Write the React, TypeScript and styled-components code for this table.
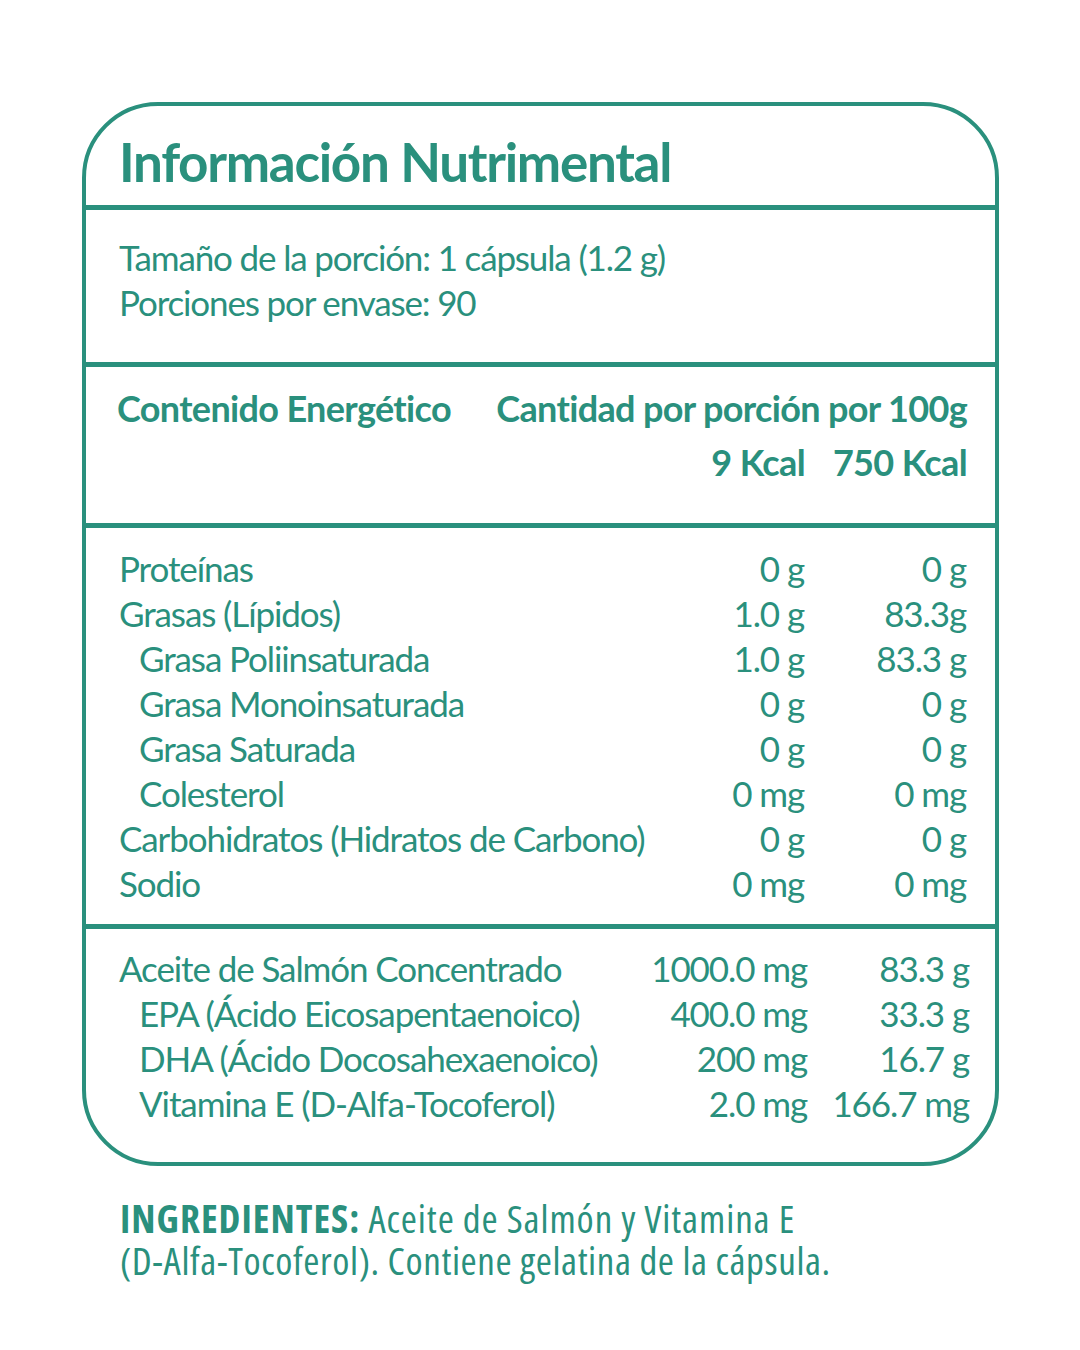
import React from "react";
import styled, { createGlobalStyle } from "styled-components";

const TEAL = "#2a907d";

const GlobalStyle = createGlobalStyle`
  html, body { margin: 0; padding: 0; background: #ffffff; }
  body { font-family: "Lato", "Open Sans", sans-serif; color: ${TEAL}; }
  * { box-sizing: border-box; }
`;

const Page = styled.main`
  padding: 102px 0 60px 82px;
`;

const Card = styled.section`
  width: 917px;
  border: 4px solid ${TEAL};
  border-radius: 76px;
`;

const TitleBar = styled.header`
  height: 99px;
  padding: 12px 0 0 33px;
  display: flex;
  align-items: center;
`;

const Title = styled.h1`
  margin: 0;
  font-family: "Lato", sans-serif;
  font-weight: 700;
  font-size: 53px;
  line-height: 1;
  letter-spacing: -1.3px;
  white-space: nowrap;
`;

const Block = styled.div<{ $pt: number; $pb: number; $pr?: number }>`
  border-top: 5px solid ${TEAL};
  padding: ${(p) => p.$pt}px ${(p) => p.$pr ?? 28}px ${(p) => p.$pb}px 33px;
`;

const Line = styled.p`
  margin: 0;
  font-size: 35px;
  line-height: 45px;
  letter-spacing: -1.15px;
  white-space: nowrap;
`;

const HeadTop = styled.div`
  display: flex;
  justify-content: space-between;
  align-items: center;
  height: 45px;
  margin-left: -2px;
`;

const HeadText = styled.span`
  font-weight: 700;
  font-size: 36px;
  line-height: 45px;
  letter-spacing: -0.65px;
  white-space: nowrap;
`;

const Grid = styled.div<{ $c1: number; $c2: number }>`
  display: grid;
  grid-template-columns: minmax(0, 1fr) ${(p) => p.$c1}px ${(p) => p.$c2}px;
  grid-auto-rows: 45px;
  align-items: center;
`;

const KcalGrid = styled(Grid)`
  margin-top: 9.5px;
`;

const Cell = styled.span<{ $indent?: boolean }>`
  font-size: 35px;
  line-height: 45px;
  letter-spacing: -1.1px;
  white-space: nowrap;
  padding-left: ${(p) => (p.$indent ? 20 : 0)}px;
`;

const Num = styled(Cell)`
  text-align: right;
`;

const KcalCell = styled(HeadText)`
  text-align: right;
`;

const Ingredients = styled.div`
  margin: 31px 0 0 0;
  padding-left: 38px;
  font-family: "Open Sans", sans-serif;
  font-stretch: 75%;
  font-size: 39px;
  line-height: 42px;
  white-space: nowrap;
`;

const IngLine = styled.p<{ $ls: number }>`
  margin: 0;
  height: 42px;
  letter-spacing: ${(p) => p.$ls}px;
`;

const Strong = styled.strong`
  font-weight: 700;
  letter-spacing: 1px;
`;

type Row = { label: string; a: string; b: string; indent?: boolean };

const nutrients: Row[] = [
  { label: "Proteínas", a: "0 g", b: "0 g" },
  { label: "Grasas (Lípidos)", a: "1.0 g", b: "83.3g" },
  { label: "Grasa Poliinsaturada", a: "1.0 g", b: "83.3 g", indent: true },
  { label: "Grasa Monoinsaturada", a: "0 g", b: "0 g", indent: true },
  { label: "Grasa Saturada", a: "0 g", b: "0 g", indent: true },
  { label: "Colesterol", a: "0 mg", b: "0 mg", indent: true },
  { label: "Carbohidratos (Hidratos de Carbono)", a: "0 g", b: "0 g" },
  { label: "Sodio", a: "0 mg", b: "0 mg" },
];

const extras: Row[] = [
  { label: "Aceite de Salmón Concentrado", a: "1000.0 mg", b: "83.3 g" },
  { label: "EPA (Ácido Eicosapentaenoico)", a: "400.0 mg", b: "33.3 g", indent: true },
  { label: "DHA (Ácido Docosahexaenoico)", a: "200 mg", b: "16.7 g", indent: true },
  { label: "Vitamina E (D-Alfa-Tocoferol)", a: "2.0 mg", b: "166.7 mg", indent: true },
];

function Rows({ rows }: { rows: Row[] }) {
  return (
    <>
      {rows.map((r) => (
        <React.Fragment key={r.label}>
          <Cell $indent={r.indent}>{r.label}</Cell>
          <Num>{r.a}</Num>
          <Num>{r.b}</Num>
        </React.Fragment>
      ))}
    </>
  );
}

export default function App() {
  return (
    <Page>
      <GlobalStyle />
      <Card>
        <TitleBar>
          <Title>Información Nutrimental</Title>
        </TitleBar>
        <Block $pt={25} $pb={37}>
          <Line>Tamaño de la porción: 1 cápsula (1.2 g)</Line>
          <Line>Porciones por envase: 90</Line>
        </Block>
        <Block $pt={18.5} $pb={38}>
          <HeadTop>
            <HeadText>Contenido Energético</HeadText>
            <HeadText>Cantidad por porción por 100g</HeadText>
          </HeadTop>
          <KcalGrid $c1={170} $c2={162}>
            <span />
            <KcalCell>9 Kcal</KcalCell>
            <KcalCell>750 Kcal</KcalCell>
          </KcalGrid>
        </Block>
        <Block $pt={18} $pb={18} $pr={29}>
          <Grid $c1={170} $c2={162}>
            <Rows rows={nutrients} />
          </Grid>
        </Block>
        <Block $pt={17} $pb={36} $pr={26}>
          <Grid $c1={170} $c2={162}>
            <Rows rows={extras} />
          </Grid>
        </Block>
      </Card>
      <Ingredients>
        <IngLine $ls={0.9}>
          <Strong>INGREDIENTES:</Strong> Aceite de Salmón y Vitamina E
        </IngLine>
        <IngLine $ls={0.6}>(D-Alfa-Tocoferol). Contiene gelatina de la cápsula.</IngLine>
      </Ingredients>
    </Page>
  );
}
